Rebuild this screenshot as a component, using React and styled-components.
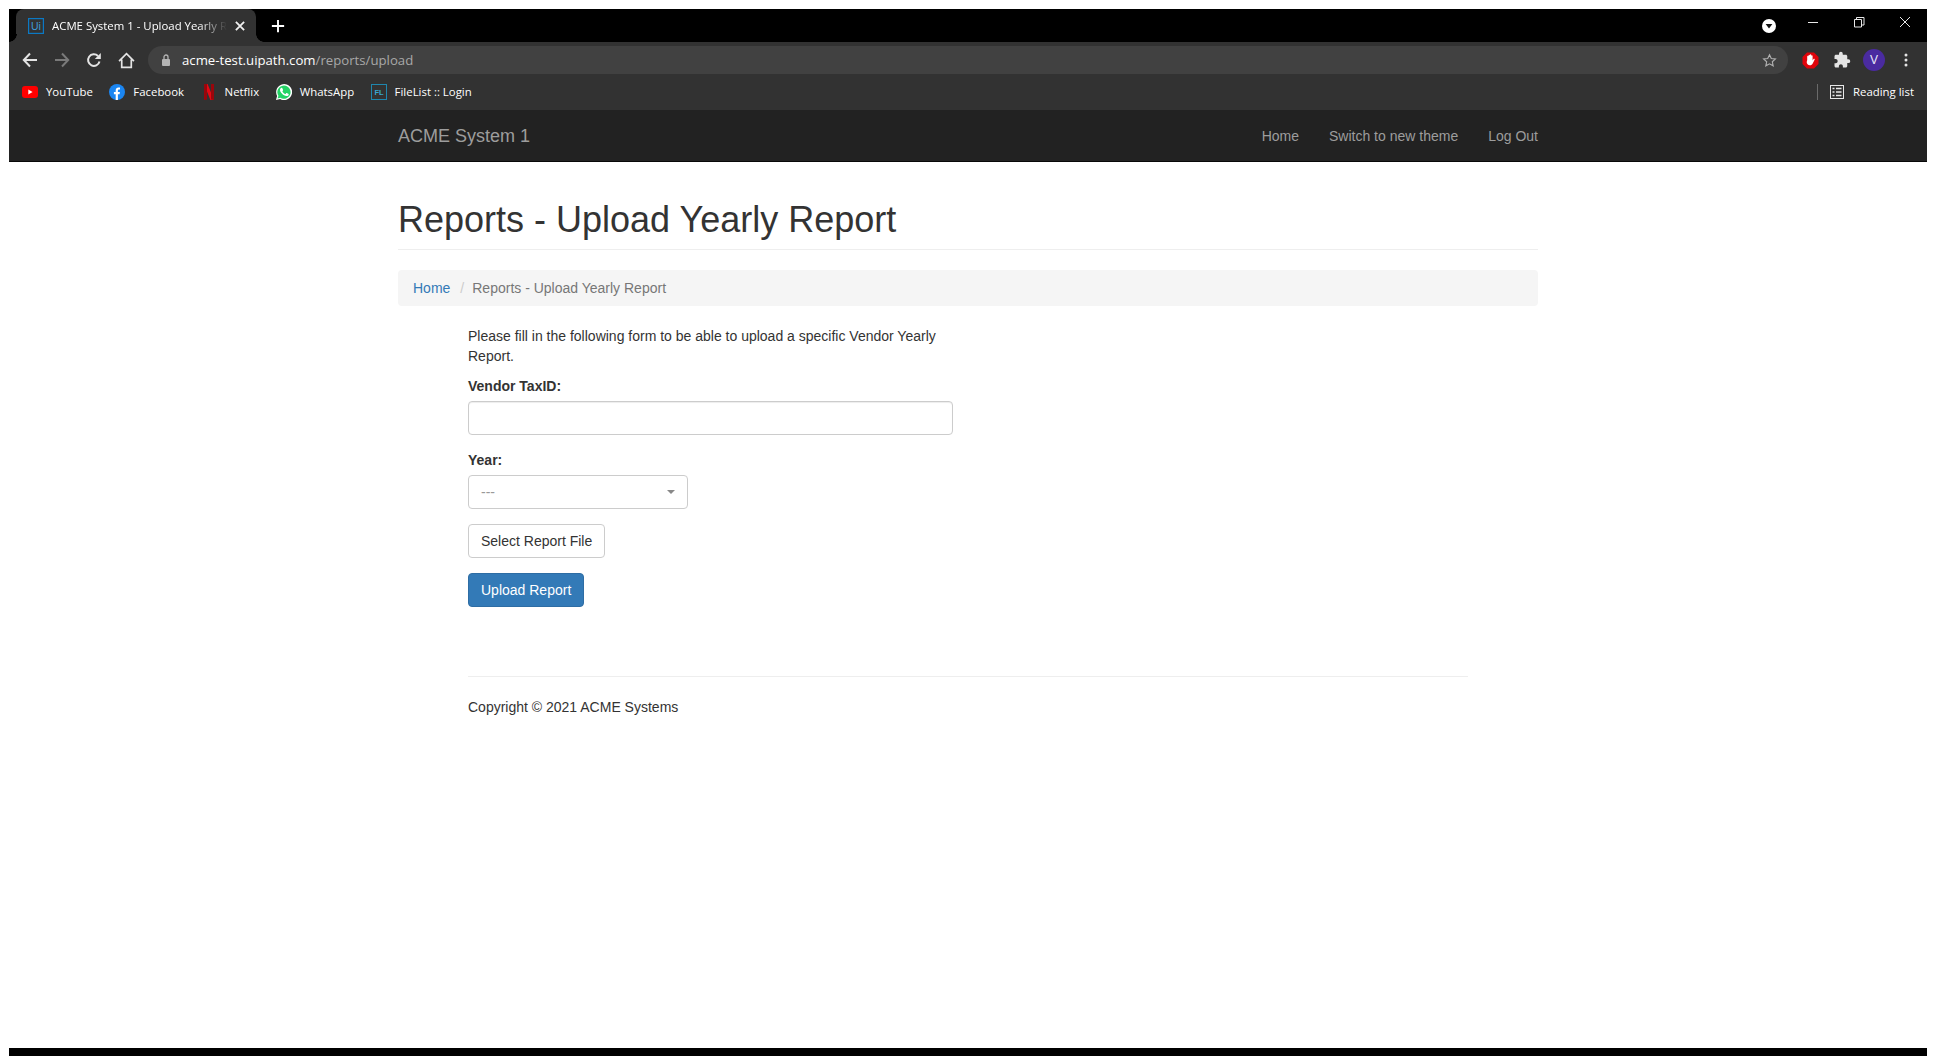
import styled, { createGlobalStyle } from "styled-components";
import { MdExtension } from "react-icons/md";

const GlobalStyle = createGlobalStyle`
  html, body { margin: 0; padding: 0; background: #fff; }
  body { font-family: "Liberation Sans", Arial, sans-serif; font-size: 14px; line-height: 20px; color: #333; }
  * { box-sizing: border-box; }
`;

const Screen = styled.div`
  height: 100vh;
  padding: 9px 9px 0;
  display: flex;
  flex-direction: column;
  overflow: hidden;
`;

/* browser chrome */
const TabStrip = styled.div`
  height: 33px;
  background: #000;
  display: flex;
  align-items: stretch;
  padding-left: 7px;
  font-family: "Open Sans", "Noto Sans", sans-serif;
  flex: none;
`;
const Tab = styled.div`
  position: relative;
  width: 240px;
  background: #323232;
  border-radius: 8px 8px 0 0;
  display: flex;
  align-items: center;
  padding: 0 10px 0 12px;
  color: #fff;
  font-size: 11.4px;

  &::before,
  &::after {
    content: "";
    position: absolute;
    bottom: 0;
    width: 8px;
    height: 8px;
  }
  &::before {
    left: -7px;
    background: radial-gradient(circle at 0 0, #000 7.5px, #323232 8px);
  }
  &::after {
    right: -8px;
    background: radial-gradient(circle at 100% 0, #000 7.5px, #323232 8px);
  }
`;
const TabTitle = styled.div`
  flex: 1;
  margin: 0 7px 0 8px;
  white-space: nowrap;
  overflow: hidden;
  -webkit-mask-image: linear-gradient(to right, #000 84%, transparent 100%);
  mask-image: linear-gradient(to right, #000 84%, transparent 100%);
`;
const NewTab = styled.div`
  width: 44px;
  display: flex;
  align-items: center;
  justify-content: center;
`;
const Spacer = styled.div`
  flex: 1;
`;
const WindowBtn = styled.div`
  width: 46px;
  display: flex;
  align-items: flex-start;
  justify-content: center;
  padding: 5px 0 0 2px;
`;
const ProfileMenu = styled.div`
  width: 41px;
  display: flex;
  align-items: center;
  padding-left: 14px;
`;
const Toolbar = styled.div`
  height: 36px;
  background: #323232;
  display: flex;
  align-items: center;
  padding: 0 5px;
  flex: none;
`;
const ToolIcon = styled.div`
  width: 32px;
  height: 28px;
  display: flex;
  align-items: center;
  justify-content: center;
  flex: none;
`;
const AddressBar = styled.div`
  flex: 1;
  height: 28px;
  margin-left: 6px;
  margin-right: 6px;
  background: #414141;
  border-radius: 14px;
  display: flex;
  align-items: center;
  padding: 0 11px 0 13px;
  font-family: "Open Sans", "Noto Sans", sans-serif;
  font-size: 13.2px;
`;
const UrlHost = styled.span`
  color: #fff;
  margin-left: 11px;
`;
const UrlPath = styled.span`
  color: #a8a8a8;
`;
const BookmarkBar = styled.div`
  height: 32px;
  background: #323232;
  display: flex;
  align-items: center;
  padding: 0 13px 4px 13px;
  gap: 16.5px;
  color: #fff;
  font-family: "Open Sans", "Noto Sans", sans-serif;
  font-size: 11.4px;
  flex: none;
`;
const Bookmark = styled.div`
  display: flex;
  align-items: center;
  gap: 8px;
  white-space: nowrap;
`;
const ReadingItem = styled(Bookmark)`
  gap: 9px;
`;
const ReadingDivider = styled.div`
  width: 1px;
  height: 16px;
  background: #6a6a6a;
  margin-left: auto;
  margin-right: -4px;
`;

/* page navbar */
const Navbar = styled.div`
  height: 52px;
  background: #222;
  border-bottom: 1px solid #080808;
  flex: none;
`;
const Container = styled.div`
  width: 1140px;
  margin: 0 auto;
`;
const NavInner = styled(Container)`
  height: 51px;
  display: flex;
  align-items: center;
  justify-content: space-between;
`;
const Brand = styled.div`
  font-size: 18px;
  color: #9d9d9d;
`;
const NavLinks = styled.div`
  display: flex;
  gap: 30px;
  color: #9d9d9d;
`;

const Main = styled.div`
  flex: 1;
  background: #fff;
`;
const PageHeader = styled.div`
  margin: 38px 0 20px;
  padding-bottom: 9px;
  border-bottom: 1px solid #eee;
`;
const Title = styled.h1`
  margin: 0;
  font-size: 36px;
  line-height: 40px;
  font-weight: 500;
  color: #333;
`;
const Crumbs = styled.div`
  height: 36px;
  background: #f5f5f5;
  border-radius: 4px;
  padding: 8px 15px;
  display: flex;
  margin-bottom: 20px;
`;
const CrumbLink = styled.a`
  color: #337ab7;
`;
const CrumbSep = styled.span`
  color: #ccc;
  padding: 0 8px 0 10px;
`;
const CrumbCurrent = styled.span`
  color: #777;
`;
const Content = styled.div`
  margin: 0 70px;
`;
const Form = styled.div`
  width: 485px;
`;
const Intro = styled.p`
  margin: 0 0 10px;
`;
const Label = styled.label`
  display: block;
  font-weight: 700;
  margin-bottom: 5px;
`;
const Group = styled.div`
  margin-bottom: 15px;
`;
const Input = styled.input`
  display: block;
  width: 100%;
  height: 34px;
  border: 1px solid #ccc;
  border-radius: 4px;
  padding: 6px 12px;
  box-shadow: inset 0 1px 1px rgba(0, 0, 0, 0.075);
  outline: none;
`;
const Select = styled.div`
  width: 220px;
  height: 34px;
  border: 1px solid #ccc;
  border-radius: 4px;
  padding: 6px 12px;
  display: flex;
  align-items: center;
  justify-content: space-between;
  color: #999;
`;
const Caret = styled.span`
  width: 0;
  height: 0;
  margin-right: 0;
  border-left: 4px solid transparent;
  border-right: 4px solid transparent;
  border-top: 4px solid #888;
`;
const Button = styled.button`
  display: block;
  height: 34px;
  padding: 6px 12px;
  font: inherit;
  border-radius: 4px;
  border: 1px solid ${(p) => (p.$primary ? "#2e6da4" : "#ccc")};
  background: ${(p) => (p.$primary ? "#337ab7" : "#fff")};
  color: ${(p) => (p.$primary ? "#fff" : "#333")};
`;
const Rule = styled.hr`
  border: 0;
  border-top: 1px solid #eee;
  margin: 69px 0 20px;
`;
const Copyright = styled.p`
  margin: 0;
`;
const BottomBar = styled.div`
  height: 8px;
  background: #000;
  flex: none;
`;
const ProfileCircle = styled.div`
  width: 22px;
  height: 22px;
  border-radius: 50%;
  background: #4a2ba0;
  color: #e8e8f8;
  font-size: 12px;
  display: flex;
  align-items: center;
  justify-content: center;
`;

const Stroke = ({ size = 16, color = "#e4e4e4", width = 2, children }) => (
  <svg width={size} height={size} viewBox="0 0 16 16" fill="none" stroke={color} strokeWidth={width}>
    {children}
  </svg>
);

const UiLogo = () => (
  <svg width="16" height="16" viewBox="0 0 16 16">
    <rect x="0.6" y="0.6" width="14.8" height="14.8" fill="none" stroke="#0b79c4" strokeWidth="1.2" />
    <text x="8" y="12" textAnchor="middle" fontSize="10.5" fontFamily="Liberation Sans" fill="#3f9bd8">Ui</text>
  </svg>
);

const YouTube = () => (
  <svg width="16" height="12" viewBox="0 0 16 12">
    <rect width="16" height="12" rx="3" fill="#f00" />
    <path d="M6.3 3.6 10.6 6 6.3 8.4Z" fill="#fff" />
  </svg>
);

const Facebook = () => (
  <svg width="16" height="16" viewBox="0 0 16 16">
    <circle cx="8" cy="8" r="8" fill="#1b86f2" />
    <path d="M6.7 16V10.2H4.9V8h1.8V6.3c0-1.9 1.1-2.9 2.8-2.9.8 0 1.5.1 1.5.1v1.9h-.9c-.9 0-1.2.6-1.2 1.1V8h2l-.3 2.2H8.9V16Z" fill="#fff" />
  </svg>
);

const Netflix = () => (
  <svg width="16" height="16" viewBox="0 0 16 16">
    <path d="M3 0H6.6L13 16H9.4Z" fill="#e50914" />
    <path d="M3 0H6V15.5L3 16Z" fill="#99060c" />
    <path d="M10 0H13V16L10 15.5Z" fill="#99060c" />
  </svg>
);

const WhatsApp = () => (
  <svg width="16" height="16" viewBox="0 0 16 16">
    <path d="M0 16 1.1 11.9A8 8 0 1 1 4.1 15Z" fill="#fff" />
    <path d="M1.6 14.4 2.4 11.7A6.6 6.6 0 1 1 4.4 13.7Z" fill="#25d366" />
    <path d="M5.7 4.3c-.2 0-.5.1-.8.4-.3.3-.9.9-.9 2.1s.9 2.4 1 2.6c.1.2 1.8 2.8 4.4 3.8 2.1.8 2.6.7 3 .6.5 0 1.5-.6 1.7-1.2.2-.6.2-1 .1-1.2-.1-.1-.2-.2-.5-.3l-1.7-.8c-.2-.1-.4-.1-.6.1l-.8 1c-.1.2-.3.2-.5.1-.9-.4-2.2-1.2-3.2-3-.1-.2 0-.4.1-.5l.5-.6c.1-.2.2-.3.1-.5L6.9 5c-.2-.5-.4-.6-.6-.6Z" fill="#fff" transform="translate(0.6 0.2) scale(0.85)" />
  </svg>
);

const FileList = () => (
  <svg width="16" height="16" viewBox="0 0 16 16">
    <rect x="0.5" y="0.5" width="15" height="15" fill="none" stroke="#1f86ad" />
    <text x="8" y="11" textAnchor="middle" fontSize="7.5" fontWeight="700" fontFamily="Liberation Sans" fill="#3aa6d0">FL</text>
  </svg>
);

const StopHand = () => (
  <svg width="17" height="17" viewBox="0 0 17 17">
    <path d="M5 0.5H12L16.5 5V12L12 16.5H5L0.5 12V5Z" fill="#e0040b" />
    <path d="M5.2 8V4.6c0-1 1.3-1 1.3 0V3.4c0-1 1.4-1 1.4 0V3c0-1 1.4-1 1.4 0v1c0-1 1.3-1 1.3 0v4.4l.9-1.3c.6-.8 1.6-.2 1.1.7l-1.9 3.6c-.6 1.1-1.4 1.8-2.8 1.8-2 0-3.2-1.2-3.2-3.2Z" fill="#fff" />
  </svg>
);

const ReadingList = () => (
  <svg width="14" height="14" viewBox="0 0 14 14" fill="none" stroke="#e8e8e8">
    <rect x="0.5" y="0.5" width="13" height="13" />
    <path d="M2.5 3.5h2M6 3.5h5.5M2.5 7h2M6 7h5.5M2.5 10.5h2M6 10.5h5.5" strokeWidth="1.6" />
  </svg>
);

const bookmarks = [
  { name: "YouTube", icon: <YouTube /> },
  { name: "Facebook", icon: <Facebook /> },
  { name: "Netflix", icon: <Netflix /> },
  { name: "WhatsApp", icon: <WhatsApp /> },
  { name: "FileList :: Login", icon: <FileList /> },
];

const App = () => {
  return (
    <Screen>
      <GlobalStyle />
      <TabStrip>
        <Tab>
          <UiLogo />
          <TabTitle>ACME System 1 - Upload Yearly Report</TabTitle>
          <Stroke size={12} color="#f0f0f0" width={2.4}>
            <path d="M2.5 2.5l11 11M13.5 2.5l-11 11" />
          </Stroke>
        </Tab>
        <NewTab>
          <Stroke size={14} color="#fff" width={2.2}>
            <path d="M8 1v14M1 8h14" />
          </Stroke>
        </NewTab>
        <Spacer />
        <ProfileMenu>
          <svg width="14" height="14" viewBox="0 0 14 14">
            <circle cx="7" cy="7" r="7" fill="#fff" />
            <path d="M3.6 5h6.8L7 9.4Z" fill="#111" />
          </svg>
        </ProfileMenu>
        <WindowBtn>
          <Stroke color="#e8e8e8" width={1}>
            <path d="M3 8.5h10" />
          </Stroke>
        </WindowBtn>
        <WindowBtn>
          <Stroke color="#e8e8e8" width={1}>
            <path d="M3.5 5.5h7v7.5h-7zM5.5 5V3.5h7.5v7.5H11" />
          </Stroke>
        </WindowBtn>
        <WindowBtn>
          <Stroke color="#e8e8e8" width={1}>
            <path d="M3 3l10 10M13 3L3 13" />
          </Stroke>
        </WindowBtn>
      </TabStrip>

      <Toolbar>
        <ToolIcon>
          <Stroke>
            <path d="M15 8H2M8 1.5 1.8 8 8 14.5" />
          </Stroke>
        </ToolIcon>
        <ToolIcon>
          <Stroke color="#7a7a7a">
            <path d="M1 8h13M8 1.5 14.2 8 8 14.5" />
          </Stroke>
        </ToolIcon>
        <ToolIcon>
          <Stroke>
            <path d="M13.5 9.5A5.8 5.8 0 1 1 12 4" />
            <path d="M14.8 1v6h-6z" fill="#e4e4e4" stroke="none" />
          </Stroke>
        </ToolIcon>
        <ToolIcon>
          <Stroke size={17} width={1.6}>
            <path d="M1 8.5 8 1.5l7 7M3.5 7v7.5h9V7" />
          </Stroke>
        </ToolIcon>
        <AddressBar>
          <svg width="10" height="12" viewBox="0 0 10 12">
            <rect x="1" y="5" width="8" height="7" rx="1" fill="#b4b4b4" />
            <path d="M3 5V3a2 2 0 0 1 4 0v2" fill="none" stroke="#b4b4b4" strokeWidth="1.3" />
          </svg>
          <UrlHost>acme-test.uipath.com</UrlHost>
          <UrlPath>/reports/upload</UrlPath>
          <Spacer />
          <Stroke size={15} color="#b0b0b0" width={1.2}>
            <path d="M8 1.8l1.9 4 4.4.5-3.3 3 .9 4.4L8 11.5l-3.9 2.2.9-4.4-3.3-3 4.4-.5Z" />
          </Stroke>
        </AddressBar>
        <ToolIcon><StopHand /></ToolIcon>
        <ToolIcon><MdExtension size={18} color="#e4e4e4" /></ToolIcon>
        <ToolIcon><ProfileCircle>V</ProfileCircle></ToolIcon>
        <ToolIcon>
          <svg width="4" height="14" viewBox="0 0 4 14" fill="#e4e4e4">
            <circle cx="2" cy="2" r="1.5" />
            <circle cx="2" cy="7" r="1.5" />
            <circle cx="2" cy="12" r="1.5" />
          </svg>
        </ToolIcon>
      </Toolbar>

      <BookmarkBar>
        {bookmarks.map((b) => (
          <Bookmark key={b.name}>
            {b.icon}
            {b.name}
          </Bookmark>
        ))}
        <ReadingDivider />
        <ReadingItem>
          <ReadingList />
          Reading list
        </ReadingItem>
      </BookmarkBar>

      <Navbar>
        <NavInner>
          <Brand>ACME System 1</Brand>
          <NavLinks>
            <span>Home</span>
            <span>Switch to new theme</span>
            <span>Log Out</span>
          </NavLinks>
        </NavInner>
      </Navbar>

      <Main>
        <Container>
          <PageHeader>
            <Title>Reports - Upload Yearly Report</Title>
          </PageHeader>
          <Crumbs>
            <CrumbLink>Home</CrumbLink>
            <CrumbSep>/</CrumbSep>
            <CrumbCurrent>Reports - Upload Yearly Report</CrumbCurrent>
          </Crumbs>
          <Content>
            <Form>
              <Intro>Please fill in the following form to be able to upload a specific Vendor Yearly Report.</Intro>
              <Group>
                <Label>Vendor TaxID:</Label>
                <Input />
              </Group>
              <Group>
                <Label>Year:</Label>
                <Select>
                  ---
                  <Caret />
                </Select>
              </Group>
              <Group>
                <Button>Select Report File</Button>
              </Group>
              <Button $primary>Upload Report</Button>
            </Form>
            <Rule />
            <Copyright>Copyright © 2021 ACME Systems</Copyright>
          </Content>
        </Container>
      </Main>
      <BottomBar />
    </Screen>
  );
};

export default App;
